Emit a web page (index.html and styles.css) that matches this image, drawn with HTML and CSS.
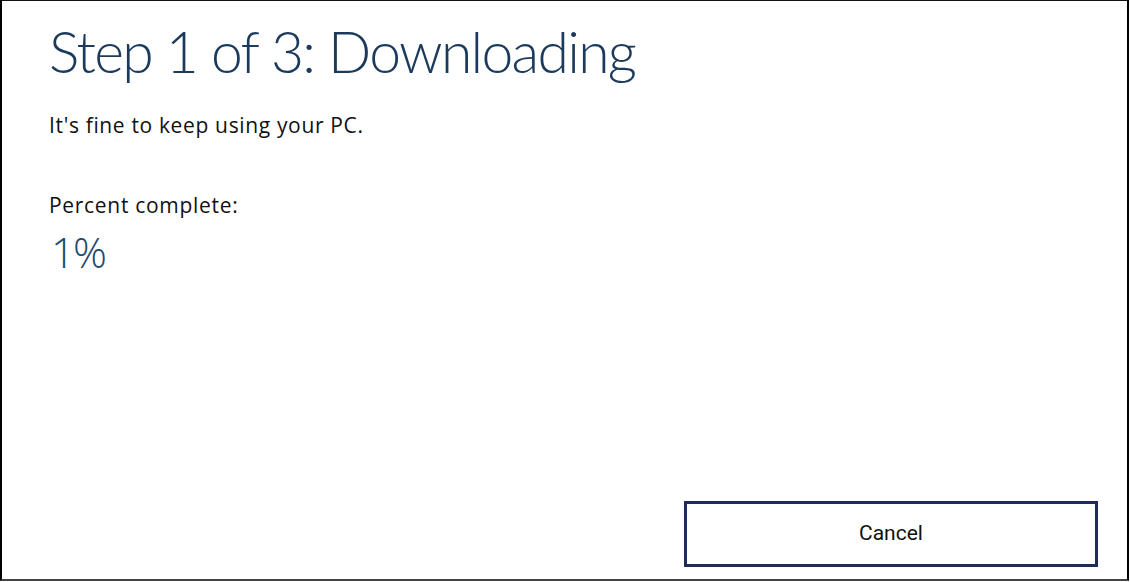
FILE: index.html
```html
<!DOCTYPE html>
<html lang="en">
<head>
<meta charset="utf-8">
<title>Step 1 of 3: Downloading</title>
<link rel="stylesheet" href="styles.css">
</head>
<body>
<div class="frame">
  <h1 class="title">Step 1 of 3: Downloading</h1>
  <p class="note">It's fine to keep using your PC.</p>
  <p class="label">Percent complete:</p>
  <div class="percent">1%</div>
  <div class="actions">
    <button class="btn" type="button">Cancel</button>
  </div>
</div>
</body>
</html>
```

FILE: styles.css
```css
html, body {
  margin: 0;
  padding: 0;
  background: #fff;
}
.frame {
  box-sizing: border-box;
  width: 1129px;
  height: 581px;
  border-left: 2px solid #000;
  border-top: 1px solid #111;
  border-right: 2px solid #000;
  border-bottom: 2px solid #444;
  display: flex;
  flex-direction: column;
  padding: 0 0 0 47px;
  font-family: "Open Sans", "Noto Sans", sans-serif;
}
.title {
  margin: 14px 0 0 0;
  font-family: Lato, "Open Sans", sans-serif;
  font-weight: 300;
  font-size: 57px;
  line-height: 72px;
  letter-spacing: -1.7px;
  color: #1b3a5c;
}
.note {
  margin: 26px 0 0 0;
  font-size: 21px;
  line-height: 24px;
  font-weight: 400;
  letter-spacing: 0.65px;
  color: #111;
}
.label {
  margin: 56px 0 0 0;
  font-size: 21px;
  line-height: 24px;
  letter-spacing: 0.7px;
  color: #111;
}
.percent {
  margin: 11px 0 0 2px;
  font-size: 42px;
  line-height: 48px;
  font-weight: 300;
  color: #1f4a72;
  letter-spacing: -2px;
}
.actions {
  margin-top: auto;
  display: flex;
  justify-content: flex-end;
  padding: 0 29px 12px 0;
}
.btn {
  box-sizing: border-box;
  width: 414px;
  height: 66px;
  background: #fff;
  border: 3px solid #1f2c5a;
  font-family: Roboto, "Liberation Sans", sans-serif;
  font-size: 21px;
  color: #111;
  padding: 0 0 2px 0;
}
```
